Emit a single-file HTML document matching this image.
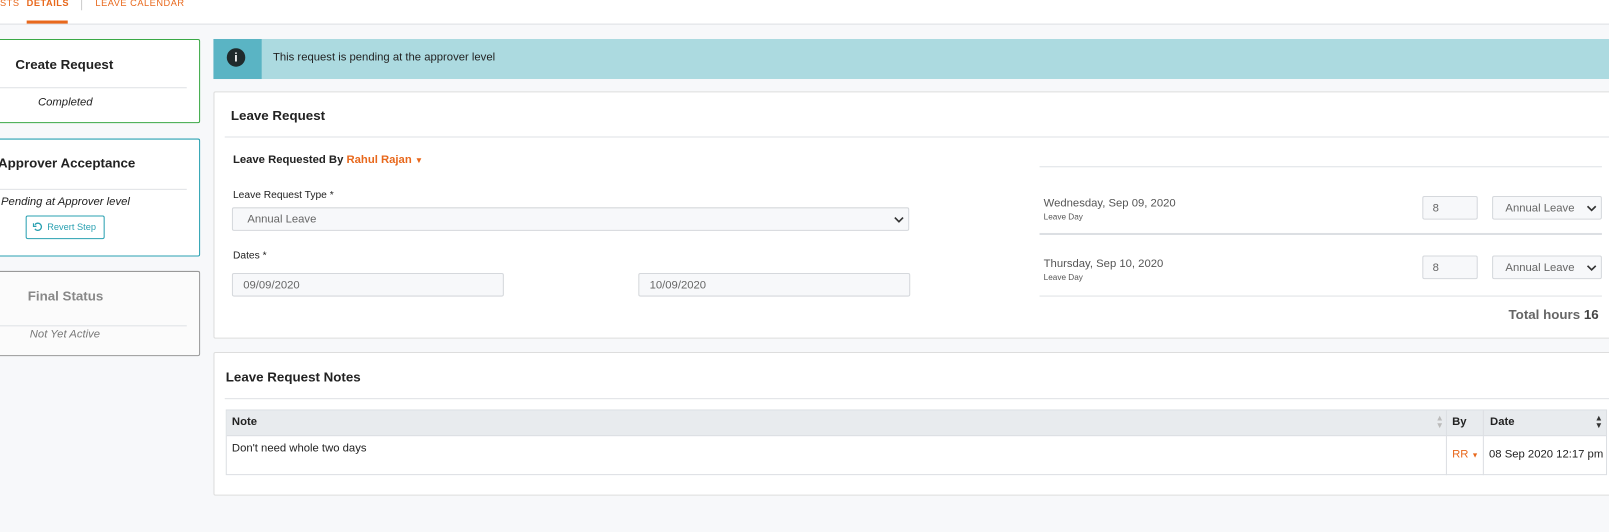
<!DOCTYPE html>
<html><head><meta charset="utf-8"><style>
*{box-sizing:border-box;margin:0;padding:0}
body{width:1609px;height:531px;overflow:hidden;background:#f7f8fa;font-family:"Liberation Sans",sans-serif;color:#222;position:relative;font-size:11px}
#w{position:absolute;left:0;top:0;width:1568px;height:518px;transform:scale(1.0262);transform-origin:0 0}
.a{position:absolute}
.box{position:absolute;background:#fff;border:1px solid #ccc;border-radius:2px}
.in{position:absolute;background:#f7f8fa;border:1px solid #d5d8dc;border-radius:2px;color:#666;font-size:11px;padding-left:14px;line-height:22px}
.hr{position:absolute;height:1px;background:#dfe2e5}
</style></head><body><div id="w">
<div class="a" style="left:0;top:0;width:1609px;height:24px;background:#fff;border-bottom:1px solid #dcdfe3"></div>
<div class="a" style="left:0;top:-2px;font-size:9px;color:#e8681c;letter-spacing:.5px">STS</div>
<div class="a" style="left:26px;top:-2px;font-size:9px;color:#e8681c;font-weight:bold;letter-spacing:.5px">DETAILS</div>
<div class="a" style="left:26px;top:20px;width:40px;height:3px;background:#e8681c"></div>
<div class="a" style="left:79px;top:0;width:1px;height:10px;background:#ccc"></div>
<div class="a" style="left:93px;top:-2px;font-size:9px;color:#e8681c;letter-spacing:.5px">LEAVE CALENDAR</div>

<div class="box" style="left:-2px;top:38px;width:197px;height:82px;border-color:#3aa845"></div>
<div class="a" style="left:15px;top:55px;font-size:13px;font-weight:bold;color:#222">Create Request</div>
<div class="hr" style="left:0;top:85px;width:182px"></div>
<div class="a" style="left:37px;top:94px;font-style:italic;font-size:11px">Completed</div>

<div class="box" style="left:-2px;top:135px;width:197px;height:115px;border-color:#29a0b1"></div>
<div class="a" style="left:-2px;top:151px;font-size:13px;font-weight:bold">Approver Acceptance</div>
<div class="hr" style="left:0;top:184px;width:182px"></div>
<div class="a" style="left:1px;top:191px;font-style:italic;font-size:11px">Pending at Approver level</div>
<div class="a" style="left:25px;top:210px;width:77px;height:23px;border:1px solid #29a0b1;border-radius:2px;color:#29a0b1;font-size:9px;line-height:21px;padding-left:20px">Revert Step<svg class="a" style="left:6px;top:5px" width="10" height="10" viewBox="0 0 10 10"><path d="M2 3A3.5 3.5 0 1 1 2 7" fill="none" stroke="#29a0b1" stroke-width="1.3"/><path d="M0.5 1.5V4.5H3.5" fill="none" stroke="#29a0b1" stroke-width="1.3"/></svg></div>

<div class="box" style="left:-2px;top:264px;width:197px;height:83px;background:#fbfbfb;border-color:#999"></div>
<div class="a" style="left:27px;top:281px;font-size:13px;font-weight:bold;color:#888">Final Status</div>
<div class="hr" style="left:0;top:317px;width:182px"></div>
<div class="a" style="left:29px;top:320px;font-style:italic;font-size:11px;color:#777">Not Yet Active</div>

<div class="a" style="left:208px;top:38px;width:1380px;height:39px;background:#acdae0"></div>
<div class="a" style="left:208px;top:38px;width:47px;height:39px;background:#5ab4c4"></div>
<div class="a" style="left:221px;top:47px;width:18px;height:18px;border-radius:50%;background:#1f2a2c;color:#fff;font-weight:bold;font-size:12px;text-align:center;line-height:18px">i</div>
<div class="a" style="left:266px;top:50px;font-size:11px;color:#222">This request is pending at the approver level</div>

<div class="box" style="left:208px;top:89px;width:1390px;height:241px;border-color:#ddd"></div>
<div class="a" style="left:225px;top:105px;font-size:13px;font-weight:bold">Leave Request</div>
<div class="hr" style="left:219px;top:133px;width:1370px"></div>
<div class="a" style="left:227px;top:150px;font-size:11px;font-weight:bold;color:#222">Leave Requested By <span style="color:#e8681c">Rahul Rajan</span> <span style="color:#e8681c;font-size:8px">▼</span></div>
<div class="a" style="left:227px;top:185px;font-size:10px">Leave Request Type *</div>
<div class="in" style="left:226px;top:202px;width:660px;height:23px">Annual Leave<svg class="a" style="right:4px;top:7px" width="10" height="8" viewBox="0 0 10 8"><path d="M1 2L5 6L9 2" fill="none" stroke="#333" stroke-width="1.6"/></svg></div>
<div class="a" style="left:227px;top:244px;font-size:10px">Dates *</div>
<div class="in" style="left:226px;top:266px;width:265px;height:23px;padding-left:10px">09/09/2020</div>
<div class="in" style="left:622px;top:266px;width:265px;height:23px;padding-left:10px">10/09/2020</div>

<div class="hr" style="left:1013px;top:162px;width:548px"></div>
<div class="a" style="left:1017px;top:192px;font-size:11px;color:#555">Wednesday, Sep 09, 2020</div>
<div class="a" style="left:1017px;top:207px;font-size:8px;color:#555">Leave Day</div>
<div class="in" style="left:1386px;top:191px;width:54px;height:23px;padding-left:9px">8</div>
<div class="in" style="left:1454px;top:191px;width:107px;height:23px;padding-left:12px">Annual Leave<svg class="a" style="right:4px;top:7px" width="10" height="8" viewBox="0 0 10 8"><path d="M1 2L5 6L9 2" fill="none" stroke="#333" stroke-width="1.6"/></svg></div>
<div class="a" style="left:1013px;top:227px;width:548px;height:2px;background:#dcdfe3"></div>
<div class="a" style="left:1017px;top:251px;font-size:11px;color:#555">Thursday, Sep 10, 2020</div>
<div class="a" style="left:1017px;top:266px;font-size:8px;color:#555">Leave Day</div>
<div class="in" style="left:1386px;top:249px;width:54px;height:23px;padding-left:9px">8</div>
<div class="in" style="left:1454px;top:249px;width:107px;height:23px;padding-left:12px">Annual Leave<svg class="a" style="right:4px;top:7px" width="10" height="8" viewBox="0 0 10 8"><path d="M1 2L5 6L9 2" fill="none" stroke="#333" stroke-width="1.6"/></svg></div>
<div class="hr" style="left:1013px;top:288px;width:548px"></div>
<div class="a" style="left:1470px;top:299px;font-size:13px;font-weight:bold;color:#666">Total hours <span style="color:#444">16</span></div>

<div class="box" style="left:208px;top:343px;width:1390px;height:140px;border-color:#ddd"></div>
<div class="a" style="left:220px;top:360px;font-size:13px;font-weight:bold">Leave Request Notes</div>
<div class="hr" style="left:219px;top:388px;width:1370px"></div>
<div class="a" style="left:220px;top:399px;width:1346px;height:64px;border:1px solid #dcdfe3"></div>
<div class="a" style="left:221px;top:400px;width:1344px;height:25px;background:#e8ebee;border-bottom:1px solid #dcdfe3"></div>
<div class="a" style="left:226px;top:405px;font-size:11px;font-weight:bold">Note</div>
<div class="a" style="left:1399px;top:404px;font-size:8px;color:#bbb;line-height:7px">▲<br>▼</div>
<div class="a" style="left:1409px;top:400px;width:1px;height:63px;background:#dcdfe3"></div>
<div class="a" style="left:1415px;top:405px;font-size:11px;font-weight:bold">By</div>
<div class="a" style="left:1445px;top:400px;width:1px;height:63px;background:#dcdfe3"></div>
<div class="a" style="left:1452px;top:405px;font-size:11px;font-weight:bold">Date</div>
<div class="a" style="left:1554px;top:404px;font-size:8px;color:#333;line-height:7px">▲<br>▼</div>
<div class="a" style="left:226px;top:431px;font-size:11px">Don't need whole two days</div>
<div class="a" style="left:1415px;top:437px;font-size:11px;color:#e8681c">RR <span style="font-size:7px">▼</span></div>
<div class="a" style="left:1451px;top:437px;font-size:11px">08 Sep 2020 12:17 pm</div>
</div></body></html>
